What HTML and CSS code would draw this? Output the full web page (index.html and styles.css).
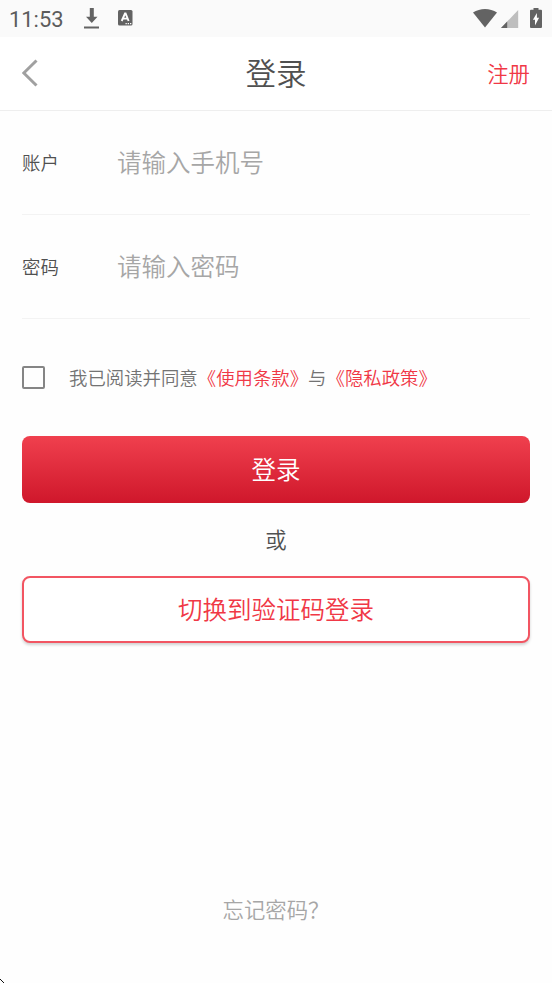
FILE: index.html
```html
<!DOCTYPE html>
<html lang="zh-CN">
<head>
<meta charset="utf-8">
<title>登录</title>
<link rel="stylesheet" href="styles.css">
</head>
<body>
<div class="status">
  <span class="time">11:53</span>
  <svg class="download" width="16" height="21" viewBox="0 0 16 21"><path fill="#636363" d="M5.800 0h4v8.800H13.500L7.800 15 2 8.800h3.800zM0 18.500h15v1.900H0z"/></svg>
  <svg class="keyboard" width="15" height="16" viewBox="0 0 15 16"><rect width="14.500" height="15.500" rx="1.500" fill="#636363"/><path d="M3.700 11 7 3.500h.6L10.600 11M4.900 8.600h4.800" fill="none" stroke="#fff" stroke-width="1.900"/><path d="M7.500 13.600h1.300M9.700 13.600H11M12 13.600h1.300" stroke="#fff" stroke-width="1.300"/></svg>
  <svg class="wifi" width="24" height="19" viewBox="0 0 24 19"><path fill="#636363" d="M0 3.600C7-1.200 17-1.200 24 3.600L12 18.500z"/></svg>
  <svg class="signal" width="18" height="18" viewBox="0 0 18 18"><path fill="#bebebe" d="M17.200 0v18H0z"/><path fill="#636363" d="M6.200 11.500V18H0z"/></svg>
  <svg class="battery" width="12" height="20" viewBox="0 0 12 20"><path fill="#636363" d="M3.500 0h5v1.800H11q1 0 1 1V19q0 1-1 1H1q-1 0-1-1V2.800q0-1 1-1h2.500z"/><path fill="#fff" d="M6.900 5v4.700h2.200L5 17.500v-5.700H2.900z"/></svg>
</div>
<header class="header">
  <svg class="back" width="18" height="30" viewBox="0 0 18 30"><path d="M14.500 1.500 1.800 14l12.700 12.500" fill="none" stroke="#a0a0a0" stroke-width="3"/></svg>
  <h1 class="title">登录</h1>
  <a class="register">注册</a>
</header>
<main class="content">
  <label class="field"><span class="label">账户</span><input class="input" type="text" placeholder="请输入手机号"></label>
  <label class="field"><span class="label">密码</span><input class="input" type="password" placeholder="请输入密码"></label>
  <div class="agreement"><span class="checkbox"></span><p class="terms">我已阅读并同意<a class="link">《使用条款》</a>与<a class="link">《隐私政策》</a></p></div>
  <button class="button primary">登录</button>
  <p class="or">或</p>
  <button class="button outline">切换到验证码登录</button>
</main>
<footer class="footer"><a>忘记密码？</a></footer>
<svg class="corner" width="4" height="4" viewBox="0 0 4 4"><path d="M0 0h1v1h1v1h1v1h1v1H3V3H2V2H1V1H0z" fill="#111"/></svg>
</body>
</html>
```
FILE: styles.css
```css
* { box-sizing: border-box; }
body {
  margin: 0;
  height: 983px;
  display: flex;
  flex-direction: column;
  overflow: hidden;
  position: relative;
  background: #fefefe;
  color: #505050;
  font-family: "Noto Sans CJK SC DemiLight", "Noto Sans CJK SC", sans-serif;
}
svg { display: block; flex: none; }
h1, p { margin: 0; font-weight: 400; }
.status {
  height: 37px;
  padding: 0 10px 0 9px;
  display: flex;
  align-items: flex-start;
  background: #fafafa;
}
.time {
  width: 75px;
  padding-top: 1px;
  font: 400 21.9px/37px Roboto, sans-serif;
  color: #5c5c5c;
}
.download { margin-top: 8px; }
.keyboard { margin: 10px 0 0 18px; }
.wifi { margin: 9px 4px 0 auto; }
.signal { margin-top: 10px; }
.battery { margin: 8px 0 0 11px; }
.header {
  height: 74px;
  padding: 0 22px;
  display: grid;
  grid-template-columns: 1fr auto 1fr;
  align-items: center;
  background: #fff;
  border-bottom: 1px solid #eee;
}
.title { padding-bottom: 4px; font-size: 30.6px; line-height: 44px; }
.register { padding-bottom: 2px; justify-self: end; font-size: 21.4px; color: #f03846; }
.content { padding: 0 22px; display: flex; flex-direction: column; }
.field {
  height: 104px;
  display: flex;
  align-items: center;
  border-bottom: 1px solid #f3f3f3;
}
.label { width: 95px; padding-bottom: 2px; font-size: 18.4px; }
.input {
  flex: 1;
  min-width: 0;
  padding: 0 0 2px;
  border: 0;
  outline: 0;
  background: none;
  font: 24.5px/36px "Noto Sans CJK SC DemiLight", "Noto Sans CJK SC", sans-serif;
}
.input::placeholder { color: #a6a6a6; }
.agreement { height: 117px; display: flex; align-items: center; }
.checkbox {
  width: 23px;
  height: 23px;
  margin-right: 24px;
  border: 2px solid #858585;
  border-radius: 2px;
}
.terms { padding-bottom: 2px; font-size: 18.4px; color: #737373; }
.link, .outline { color: #f03846; }
.button {
  height: 67px;
  padding: 0 0 2px;
  border: 0;
  border-radius: 8px;
  font: 24.5px/36px "Noto Sans CJK SC DemiLight", "Noto Sans CJK SC", sans-serif;
}
.primary { padding-bottom: 1px; color: #fff; background: linear-gradient(#f0404e, #cf172b); }
.or { height: 73px; line-height: 71px; text-align: center; font-size: 21.4px; }
.outline {
  padding-bottom: 1px;
  background: #fff;
  border: 2px solid #f25562;
  box-shadow: 0 2px 3px rgba(0, 0, 0, .18);
}
.footer {
  margin-top: auto;
  padding-bottom: 58px;
  text-align: center;
  font-size: 21.4px;
  line-height: 32px;
  color: #a6a6a6;
}
.corner { position: absolute; left: 0; bottom: 0; }
```
